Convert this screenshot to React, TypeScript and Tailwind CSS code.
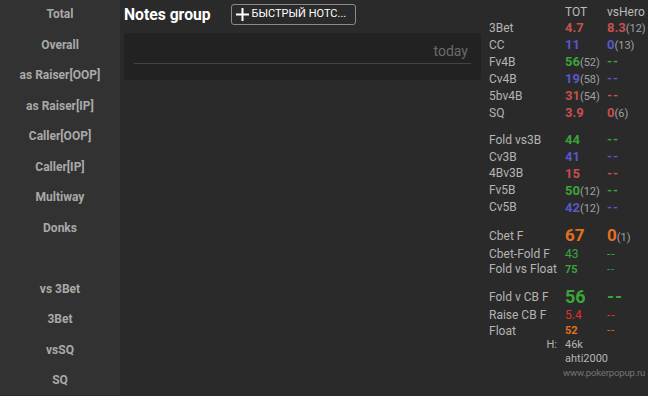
import React from 'react';

type Cell = { v: string; c: string; p?: string; size?: string };

interface StatRow {
  label: string;
  tot: Cell;
  hero: Cell;
  h: string;
}

const RED = 'text-[#c8504f]';
const BLUE = 'text-[#5858cc]';
const GREEN = 'text-[#3ba53b]';
const ORANGE = 'text-[#e5701e]';
const ORED = 'text-[#e0302a]';

const sideItems = [
  'Total',
  'Overall',
  'as Raiser[OOP]',
  'as Raiser[IP]',
  'Caller[OOP]',
  'Caller[IP]',
  'Multiway',
  'Donks',
  '',
  'vs 3Bet',
  '3Bet',
  'vsSQ',
  'SQ',
];

const group1: StatRow[] = [
  { label: '3Bet', tot: { v: '4.7', c: RED }, hero: { v: '8.3', c: RED, p: '(12)' }, h: 'h-[17px]' },
  { label: 'CC', tot: { v: '11', c: BLUE }, hero: { v: '0', c: BLUE, p: '(13)' }, h: 'h-[17px]' },
  { label: 'Fv4B', tot: { v: '56', c: GREEN, p: '(52)' }, hero: { v: '--', c: GREEN }, h: 'h-[17px]' },
  { label: 'Cv4B', tot: { v: '19', c: BLUE, p: '(58)' }, hero: { v: '--', c: BLUE }, h: 'h-[17px]' },
  { label: '5bv4B', tot: { v: '31', c: RED, p: '(54)' }, hero: { v: '--', c: RED }, h: 'h-[17px]' },
  { label: 'SQ', tot: { v: '3.9', c: RED }, hero: { v: '0', c: RED, p: '(6)' }, h: 'h-[17px]' },
];

const group2: StatRow[] = [
  { label: 'Fold vs3B', tot: { v: '44', c: GREEN }, hero: { v: '--', c: GREEN }, h: 'h-[16.8px]' },
  { label: 'Cv3B', tot: { v: '41', c: BLUE }, hero: { v: '--', c: BLUE }, h: 'h-[16.8px]' },
  { label: '4Bv3B', tot: { v: '15', c: RED }, hero: { v: '--', c: RED }, h: 'h-[16.8px]' },
  { label: 'Fv5B', tot: { v: '50', c: GREEN, p: '(12)' }, hero: { v: '--', c: GREEN }, h: 'h-[16.8px]' },
  { label: 'Cv5B', tot: { v: '42', c: BLUE, p: '(12)' }, hero: { v: '--', c: BLUE }, h: 'h-[16.8px]' },
];

const group3: StatRow[] = [
  { label: 'Cbet F', tot: { v: '67', c: ORANGE, size: 'text-[17px]' }, hero: { v: '0', c: ORANGE, p: '(1)', size: 'text-[17px]' }, h: 'h-[20px]' },
  { label: 'Cbet-Fold F', tot: { v: '43', c: GREEN, size: 'text-[12px] font-normal' }, hero: { v: '--', c: GREEN, size: 'text-[12px] font-normal' }, h: 'h-[16px]' },
  { label: 'Fold vs Float', tot: { v: '75', c: GREEN, size: 'text-[11px]' }, hero: { v: '--', c: GREEN, size: 'text-[11px] font-normal' }, h: 'h-[15px]' },
];

const group4: StatRow[] = [
  { label: 'Fold v CB F', tot: { v: '56', c: GREEN, size: 'text-[18px]' }, hero: { v: '--', c: GREEN, size: 'text-[18px]' }, h: 'h-[20px]' },
  { label: 'Raise CB F', tot: { v: '5.4', c: ORED, size: 'text-[12px] font-normal' }, hero: { v: '--', c: ORED, size: 'text-[12px] font-normal' }, h: 'h-[16px]' },
  { label: 'Float', tot: { v: '52', c: ORANGE, size: 'text-[11px]' }, hero: { v: '--', c: ORANGE, size: 'text-[11px] font-normal' }, h: 'h-[16px]' },
];

const Value: React.FC<{ cell: Cell }> = ({ cell }) => (
  <span className="flex items-baseline whitespace-nowrap leading-none">
    <span
      className={`${cell.size ?? 'text-[13px]'} font-bold ${cell.c} ${cell.v === '--' ? 'tracking-[1px]' : ''}`}
    >
      {cell.v}
    </span>
    {cell.p && <span className="text-[11px] text-[#a0a0a0]">{cell.p}</span>}
  </span>
);

const StatGroup: React.FC<{ rows: StatRow[]; className?: string }> = ({ rows, className = '' }) => (
  <div className={className}>
    {rows.map((r) => (
      <div key={r.label} className={`grid grid-cols-[76px_42px_1fr] grid-rows-1 items-center leading-none ${r.h}`}>
        <span className="text-[12px] text-[#b4b4b4] whitespace-nowrap">{r.label}</span>
        <Value cell={r.tot} />
        <Value cell={r.hero} />
      </div>
    ))}
  </div>
);

export default function App() {
  return (
    <div
      className="flex w-[648px] h-[396px] overflow-hidden bg-[#2a2a2a]"
      style={{ fontFamily: 'Roboto, "Noto Sans", sans-serif' }}
    >
      {/* левая колонка */}
      <div className="w-[120px] shrink-0 h-full bg-[#323232] flex flex-col -mt-px">
        {sideItems.map((s, i) => (
          <div
            key={i}
            className="h-[30.5px] shrink-0 flex items-center justify-center text-[12px] font-bold text-[#a9a9a9]"
          >
            {s}
          </div>
        ))}
      </div>

      {/* заметки */}
      <div className="w-[361px] shrink-0 pl-[4px] pt-[4px]">
        <div className="flex items-center h-[21px]">
          <span className="text-[15.7px] font-bold text-white leading-none">Notes group</span>
          <button className="ml-[20px] h-[21px] w-[125px] flex items-center gap-[2px] pl-[3px] border border-[#8a8a8a] rounded-[3px] text-white">
            <svg width="15" height="15" viewBox="0 0 15 15">
              <path d="M7.5 1v13M1 7.5h13" stroke="white" strokeWidth="2" />
            </svg>
            <span className="text-[11px] whitespace-nowrap">БЫСТРЫЙ НОТС...</span>
          </button>
        </div>
        <div className="mt-[8px] h-[47px] rounded-[4px] bg-[#222222] px-[10px] pt-[9px]">
          <div className="flex justify-end border-b border-[#444444] pb-[3px] pr-[3px]">
            <span className="text-[14px] text-[#6a6a6a] leading-[18px]">today</span>
          </div>
        </div>
      </div>

      {/* статистика */}
      <div className="flex-1 min-w-0 pl-[8px] pt-[4px] overflow-hidden">
        <div className="grid grid-cols-[76px_42px_1fr] h-[15px] items-center text-[12px] leading-none text-[#bbbbbb]">
          <span />
          <span>TOT</span>
          <span>vsHero</span>
        </div>
        <StatGroup rows={group1} />
        <StatGroup rows={group2} className="mt-[10.5px]" />
        <StatGroup rows={group3} className="mt-[10.5px]" />
        <StatGroup rows={group4} className="mt-[10px]" />
        <div className="grid grid-cols-[76px_1fr] text-[11px] text-[#b4b4b4] leading-[14px] -mt-[1px]">
          <span className="text-right pr-[8px]">H:</span>
          <span>46k</span>
          <span />
          <span>ahti2000</span>
        </div>
        <div className="pl-[74px] text-[9.6px] tracking-[-0.2px] text-[#747474] leading-[14px] whitespace-nowrap">
          www.pokerpopup.ru
        </div>
      </div>
    </div>
  );
}
